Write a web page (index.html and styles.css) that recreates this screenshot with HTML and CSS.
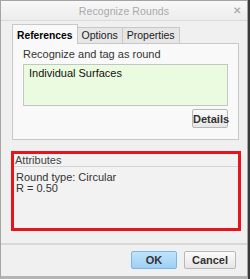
FILE: index.html
```html
<!DOCTYPE html>
<html>
<head>
<meta charset="utf-8">
<link rel="stylesheet" href="styles.css">
</head>
<body>
<div class="dialog">
  <div class="titlebar">
    <span class="title">Recognize Rounds</span>
    <span class="close">&#x2715;</span>
  </div>
  <div class="content">
    <div class="tabs">
      <div class="tab active">References</div>
      <div class="tab">Options</div>
      <div class="tab">Properties</div>
    </div>
    <div class="panel">
      <div class="label">Recognize and tag as round</div>
      <div class="listbox">Individual Surfaces</div>
      <div class="row-right"><button class="btn details">Details</button></div>
    </div>
    <div class="attributes">
      <div class="attr-head">Attributes</div>
      <div class="attr-body">
        <div>Round type: Circular</div>
        <div>R = 0.50</div>
      </div>
    </div>
  </div>
  <div class="footer">
    <button class="btn ok">OK</button>
    <button class="btn cancel">Cancel</button>
  </div>
</div>
</body>
</html>
```
FILE: styles.css
```css
* { box-sizing: border-box; }
html, body { margin: 0; padding: 0; }
body {
  background: #3a3a3a;
  width: 250px;
  height: 279px;
  font-family: "Liberation Sans", Arial, sans-serif;
  font-size: 11px;
  color: #222;
}
.dialog {
  width: 248px;
  height: 279px;
  background: #f0f0f0;
  border: 1px solid #a4a4a4;
  border-bottom: 3px solid #b4b4b4;
  display: flex;
  flex-direction: column;
}
.titlebar {
  height: 20px;
  flex: none;
  background: linear-gradient(#f8f8f8, #ececec);
  border-bottom: 1px solid #dadada;
  position: relative;
  display: flex;
  align-items: center;
  justify-content: center;
}
.title {
  color: #a9a9a9;
  font-size: 10.5px;
  letter-spacing: 0.1px;
}
.close {
  position: absolute;
  right: 6px;
  top: 4px;
  color: #b0b0b0;
  font-size: 10px;
  font-weight: bold;
}
.content {
  padding: 2px 8px 0 11px;
  display: flex;
  flex-direction: column;
}
.tabs {
  display: flex;
  align-items: flex-end;
  height: 20px;
  position: relative;
  z-index: 1;
}
.tab {
  height: 16px;
  padding: 0 4px;
  border: 1px solid #c8c8c8;
  border-bottom: none;
  border-left: none;
  background: #e6e6e6;
  color: #222;
  font-size: 10.5px;
  line-height: 15px;
}
.tab.active {
  height: 20px;
  margin-bottom: -1px;
  background: #f9f9f9;
  border-left: 1px solid #c8c8c8;
  font-weight: bold;
  color: #000;
  padding: 3px 4px 0 4px;
  font-size: 10.3px;
}
.panel {
  width: 227px;
  height: 97px;
  background: #f9f9f9;
  border: 1px solid #c8c8c8;
  padding: 4px 10px 0 10px;
}
.label {
  color: #333;
  line-height: 13px;
}
.listbox {
  margin-top: 3px;
  height: 42px;
  background: #ebfbdf;
  border: 1px solid #c4c4c4;
  padding: 2px 5px;
  color: #111;
  line-height: 13px;
}
.row-right {
  display: flex;
  justify-content: flex-end;
  margin-top: 3px;
}
.btn {
  font-family: "Liberation Sans", Arial, sans-serif;
  font-size: 11px;
  font-weight: bold;
  color: #333;
  border: 1px solid #b8b8b8;
  border-radius: 2px;
  background: linear-gradient(#fbfbfb, #e6e6e6);
  padding: 0;
  height: 19px;
}
.details {
  width: 36px;
}
.attributes {
  margin-top: 11px;
  margin-left: -1px;
  width: 230px;
  height: 80px;
  border: 3px solid #e8141c;
  background: #f2f2f2;
}
.attr-head {
  height: 13px;
  line-height: 12px;
  padding-left: 1px;
  color: #444;
  border-bottom: 1px solid #d4d4d4;
}
.attr-body {
  padding: 5px 2px;
  color: #333;
  line-height: 11px;
}
.footer {
  margin-top: auto;
  height: 33px;
  border-top: 2px solid #d8d8d8;
  display: flex;
  justify-content: flex-end;
  align-items: center;
  gap: 7px;
  padding: 0 11px 2px 0;
}
.ok {
  width: 46px;
  height: 18px;
  background: linear-gradient(#bfe3fb, #9fd0f4);
  border-color: #7cb7e4;
}
.cancel {
  width: 52px;
  height: 18px;
}
```
